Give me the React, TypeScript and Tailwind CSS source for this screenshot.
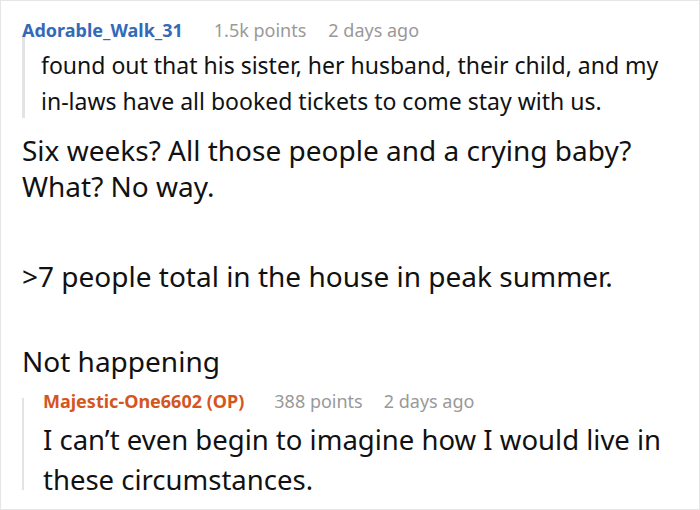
import React from "react";

export default function App() {
  return (
    <div
      className="w-[700px] h-[510px] overflow-hidden bg-white border border-[#e6e6e6] text-[#111]"
      style={{ fontFamily: '"Noto Sans", "Open Sans", sans-serif' }}
    >
      <div className="pl-[21px] pt-[17px]">
        <div className="flex items-baseline text-[18px] leading-[24px] whitespace-nowrap">
          <span className="font-bold text-[#336ab8]">Adorable_Walk_31</span>
          <span className="ml-[31px] text-[#999]">1.5k points</span>
          <span className="ml-[22px] text-[#999]">2 days ago</span>
        </div>
        <div className="flex mt-[-5px]">
          <div className="w-[3px] h-[81px] bg-[#e3e3e3] shrink-0" />
          <div className="pl-[16px] pt-[10px] text-[23px] leading-[36px] pr-[30px]">
            found out that his sister, her husband, their child, and my in-laws have all booked tickets to come stay with us.
          </div>
        </div>
        <div className="mt-[13px] pr-[30px] text-[28px] leading-[36px]">
          <p>Six weeks? All those people and a crying baby? What? No way.</p>
          <p className="mt-[54px]">&gt;7 people total in the house in peak summer.</p>
          <p className="mt-[49px]">Not happening</p>
        </div>
        <div className="flex mt-[10px]">
          <div className="w-[2px] mt-[9px] h-[92px] bg-[#e3e3e3] shrink-0" />
          <div className="pl-[19px]">
            <div className="flex items-baseline text-[18px] leading-[24px] whitespace-nowrap">
              <span className="font-bold text-[#d4561f]">Majestic-One6602 (OP)</span>
              <span className="ml-[30px] text-[#999]">388 points</span>
              <span className="ml-[21px] text-[#999]">2 days ago</span>
            </div>
            <div className="mt-[7px] text-[27.5px] leading-[40px] pr-[20px]">
              I can’t even begin to imagine how I would live in these circumstances.
            </div>
          </div>
        </div>
      </div>
    </div>
  );
}
